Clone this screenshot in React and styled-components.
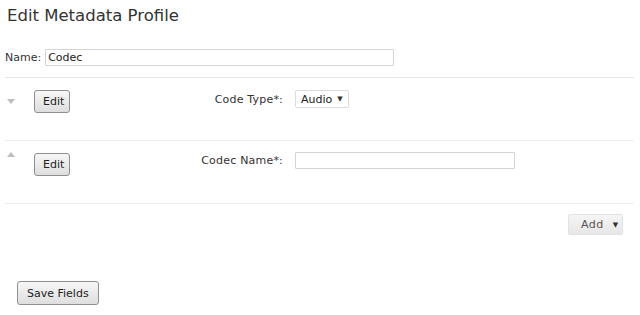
import React from 'react';
import styled, { createGlobalStyle } from 'styled-components';

const Global = createGlobalStyle`
  body {
    margin: 0;
    background: #fff;
    font-family: "DejaVu Sans", Verdana, sans-serif;
    color: #333;
  }
`

const Page = styled.div`
  width: 640px;
  height: 315px;
  padding: 0 6px 0 5px;
  box-sizing: border-box;
`

const Title = styled.h1`
  margin: 0;
  padding: 6px 0 0 2px;
  height: 36px;
  box-sizing: border-box;
  font-size: 16.5px;
  font-weight: normal;
  color: #333;
`

const NameRow = styled.div`
  display: flex;
  align-items: center;
  gap: 4px;
  height: 42px;
  padding-top: 1px;
  box-sizing: border-box;
  border-bottom: 1px solid #e6e6e6;
  font-size: 11px;
`

const TextInput = styled.input`
  box-sizing: border-box;
  width: ${p => p.$width}px;
  height: 17px;
  margin: 0;
  padding: 0 2px;
  border: 1px solid #d4d4d4;
  border-radius: 1px;
  font: inherit;
  font-size: 11px;
  color: #222;
  outline: none;
`

const FieldRow = styled.div`
  display: flex;
  align-items: flex-start;
  height: 63px;
  padding-top: ${p => p.$top}px;
  box-sizing: border-box;
  border-bottom: 1px solid #eee;
`

const Toggle = styled.div`
  width: 29px;
  padding-left: 2px;
  box-sizing: border-box;
  margin-top: ${p => p.$top}px;
  svg { display: block; }
`

const Button = styled.button`
  box-sizing: border-box;
  height: ${p => p.$h || 23}px;
  ${p => p.$w ? `width: ${p.$w}px;` : ''}
  padding: 0 ${p => p.$px || 8}px;
  border: 1px solid #8f8f8f;
  border-radius: 3px;
  background: linear-gradient(#f7f7f7, #dedede);
  font-family: "DejaVu Sans", Verdana, sans-serif;
  font-size: 11px;
  color: #222;
  cursor: pointer;
`

const Label = styled.label`
  width: 225px;
  padding-right: 12px;
  box-sizing: border-box;
  text-align: right;
  font-size: 11px;
  letter-spacing: 0.2px;
  line-height: 17px;
  margin-top: ${p => p.$top}px;
`

const Select = styled.div`
  box-sizing: border-box;
  display: flex;
  align-items: center;
  gap: 5px;
  width: 54px;
  height: 18px;
  padding: 0 5px 0 5px;
  border: 1px solid #dcdcdc;
  border-radius: 2px;
  font-size: 11px;
  color: #222;
`

const Caret = styled.span`
  font-size: 7px;
  color: #333;
`

const AddRow = styled.div`
  display: flex;
  justify-content: flex-end;
  padding: 10px 11px 0 0;
  height: 77px;
  box-sizing: border-box;
`

const AddButton = styled.button`
  box-sizing: border-box;
  display: flex;
  align-items: center;
  gap: 9px;
  width: 55px;
  height: 21px;
  padding: 0 0 0 12px;
  border: 1px solid #e2e2e2;
  border-radius: 2px;
  background: linear-gradient(#f5f5f5, #e7e7e7);
  font-family: "DejaVu Sans", Verdana, sans-serif;
  font-size: 11px;
  letter-spacing: 0.5px;
  color: #555;
`

const SaveWrap = styled.div`
  padding-left: 12px;
`

const Triangle = ({ up }) => (
  <svg width="8" height="5" viewBox="0 0 8 5">
    <polygon points={up ? '0,5 8,5 4,0' : '0,0 8,0 4,5'} fill="#bdbdbd" />
  </svg>
)

const App = () => (
  <Page>
    <Global />
    <Title>Edit Metadata Profile</Title>
    <NameRow>
      <span>Name:</span>
      <TextInput $width={349} defaultValue="Codec" />
    </NameRow>
    <FieldRow $top={12}>
      <Toggle $top={9}><Triangle /></Toggle>
      <Button $w={36}>Edit</Button>
      <Label $top={1}>Code Type*:</Label>
      <Select>Audio <Caret>▼</Caret></Select>
    </FieldRow>
    <FieldRow $top={11}>
      <Toggle $top={0}><Triangle up /></Toggle>
      <Button $w={36} style={{ marginTop: 1 }}>Edit</Button>
      <Label $top={0}>Codec Name*:</Label>
      <TextInput $width={220} />
    </FieldRow>
    <AddRow>
      <AddButton>Add <Caret>▼</Caret></AddButton>
    </AddRow>
    <SaveWrap>
      <Button $h={24} $px={9}>Save Fields</Button>
    </SaveWrap>
  </Page>
)

export default App;
